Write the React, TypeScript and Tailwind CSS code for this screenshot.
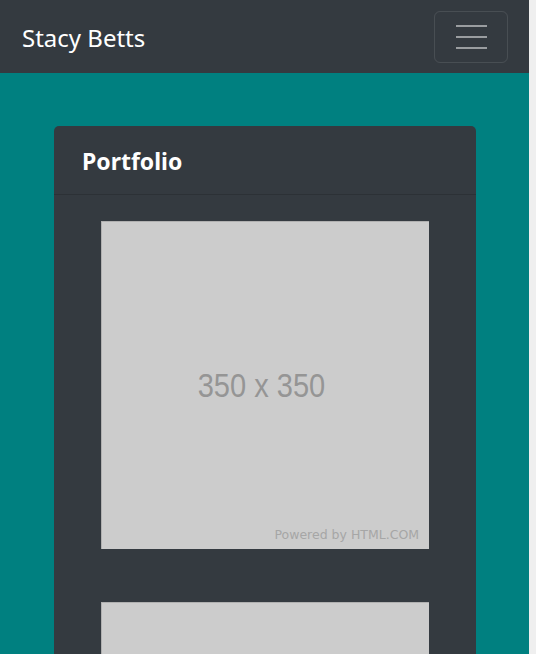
const SANS = "font-['Noto_Sans','Open_Sans',sans-serif]";

function Placeholder({ label }: { label?: string }) {
  return (
    <div className="relative h-[328px] w-[328px] shrink-0 border-l border-t border-[#b0b0b0] bg-[#cccccc]">
      {label && (
        <>
          <div className="flex h-full items-center justify-center pr-[8px]">
            <span className="scale-x-[0.88] font-['Liberation_Sans',Arial,sans-serif] text-[33px] leading-none text-[#959595]">
              {label}
            </span>
          </div>
          <span className="absolute bottom-[8px] right-[10px] font-['DejaVu_Sans',sans-serif] text-[12.5px] leading-none text-[#a6a6a6]">
            Powered by HTML.COM
          </span>
        </>
      )}
    </div>
  );
}

export default function App() {
  return (
    <div className="flex h-[654px] w-[536px] overflow-hidden bg-[#efefef]">
      <div className="flex w-[529px] shrink-0 flex-col bg-[#008080]">
        <nav className="flex h-[73px] shrink-0 items-center justify-between bg-[#343a40] pl-[22px] pr-[21px]">
          <span className={`${SANS} pt-[2px] text-[24px] leading-none text-white`}>Stacy Betts</span>
          <button
            type="button"
            aria-label="Toggle navigation"
            className="flex h-[52px] w-[74px] flex-col items-center justify-center gap-[9px] rounded-[6px] border border-white/10"
          >
            <span className="block h-[2px] w-[31px] bg-[#9a9da0]" />
            <span className="block h-[2px] w-[31px] bg-[#9a9da0]" />
            <span className="block h-[2px] w-[31px] bg-[#9a9da0]" />
          </button>
        </nav>

        <main className="flex-1 pl-[54px] pt-[53px]">
          <section className="w-[422px] overflow-hidden rounded-t-[5px] bg-[#343a40]">
            <header className="flex h-[69px] items-center border-b border-[#2c3136] px-[28px] pt-[3px]">
              <h2 className={`${SANS} text-[23px] font-bold leading-none text-white`}>Portfolio</h2>
            </header>
            <div className="flex flex-col items-center gap-[53px] pt-[26px]">
              <Placeholder label="350 x 350" />
              <Placeholder />
            </div>
          </section>
        </main>
      </div>
    </div>
  );
}
